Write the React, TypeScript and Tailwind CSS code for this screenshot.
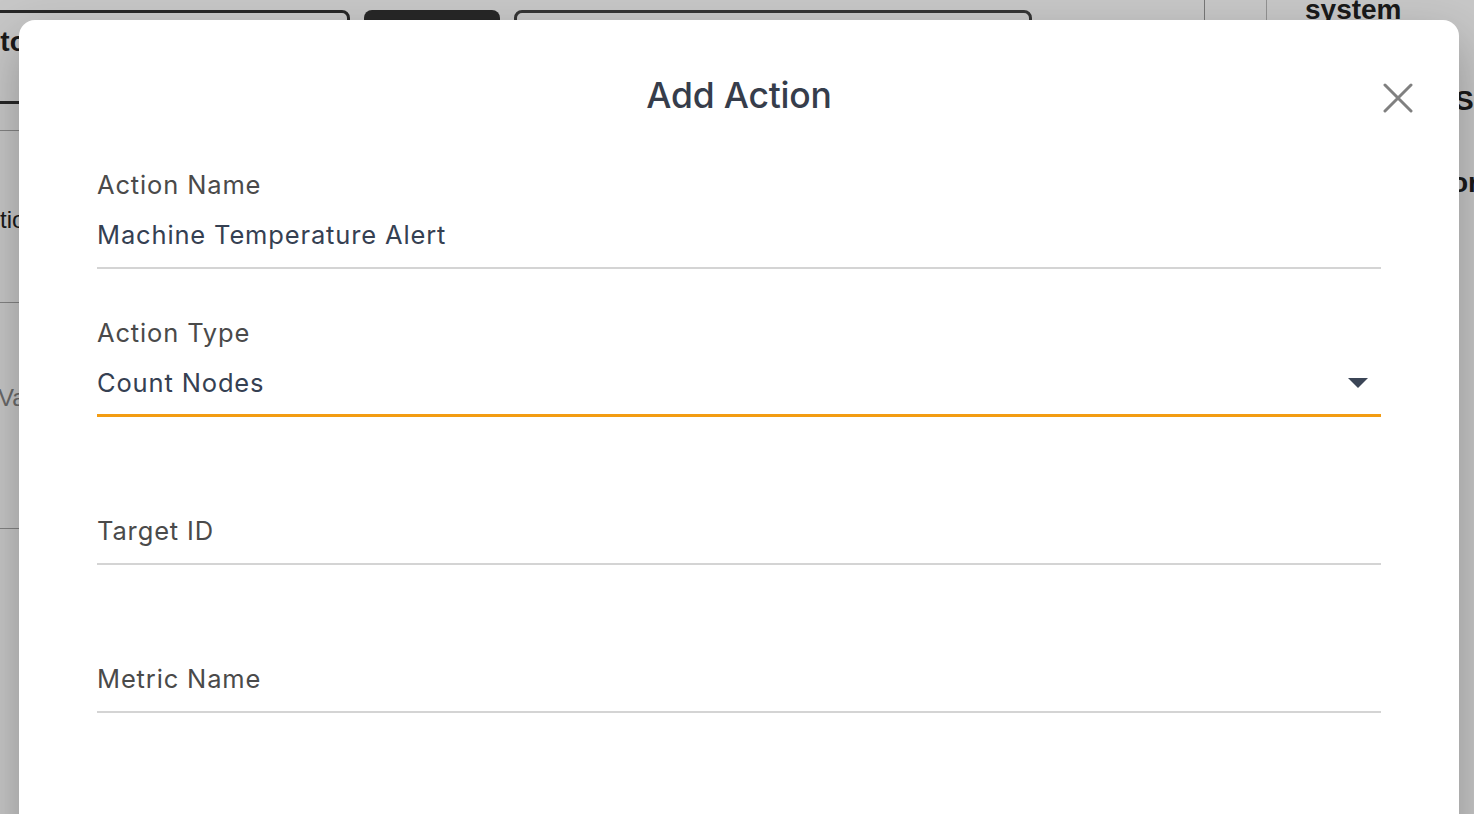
import { useState } from 'react';

type Field = {
    label: string;
    value?: string;
    select?: boolean;
    focused?: boolean;
};

const fields: Field[] = [
    { label: 'Action Name', value: 'Machine Temperature Alert' },
    { label: 'Action Type', value: 'Count Nodes', select: true, focused: true },
    { label: 'Target ID' },
    { label: 'Metric Name' },
];

function FormField({ field }: { field: Field }) {
    const filled = !!field.value;
    const border = field.focused
        ? 'border-b-[3px] border-[#f39c12] pb-[14px]'
        : 'border-b-2 border-[#d4d4d4] pb-[15px]';

    return (
        <div className={`flex flex-col ${border}`}>
            <div className="h-[30px] text-[25.5px] leading-[32px] tracking-[0.85px] text-[#4a4a4a]">
                {filled ? field.label : ''}
            </div>
            <div className="mt-[19px] flex h-[34px] items-center justify-between text-[25.5px] leading-[36px] tracking-[0.85px]">
                {filled ? (
                    <span className="text-[#354052]">{field.value}</span>
                ) : (
                    <span className="text-[#4a4a4a]">{field.label}</span>
                )}
                {field.select && (
                    <svg width="20" height="10" viewBox="0 0 20 10" className="mr-[13px]">
                        <path d="M0 0h20L10 10z" fill="#3b4556" />
                    </svg>
                )}
            </div>
        </div>
    );
}

function BackgroundPage() {
    return (
        <div className="flex h-full flex-col font-['Liberation_Sans',sans-serif] text-[#222]">
            {/* top toolbar */}
            <div className="flex h-[104px] items-start">
                <div className="ml-[-40px] mt-[10px] flex h-[94px] w-[390px] items-start rounded-lg border-[3px] border-[#333] pt-[13px] text-[28px] font-bold leading-[32px]">
                    Auto
                </div>
                <div className="ml-[14px] mt-[10px] h-[60px] w-[136px] rounded-lg bg-[#333]" />
                <div className="ml-[14px] mt-[10px] h-[60px] w-[518px] rounded-lg border-[3px] border-[#444]" />
                <div className="ml-[172px] h-[40px] w-px bg-[#999]" />
                <div className="ml-[61px] h-[40px] w-px bg-[#bbb]" />
                <div className="ml-[38px] mt-[-6px] text-[28px] font-bold leading-[32px]">system</div>
            </div>
            <div className="flex flex-1">
                <div className="flex w-[120px] flex-col">
                    <div className="mt-[26px] h-px bg-[#aaa]" />
                    <div className="ml-[-28px] flex h-[171px] items-center pt-[6px] text-[24px]">Action</div>
                    <div className="h-px bg-[#aaa]" />
                    <div className="ml-[-2px] h-[225px] pt-[80px] text-[24px] leading-[30px] text-[#888]">Value</div>
                    <div className="h-px bg-[#aaa]" />
                </div>
                <div className="flex-1" />
                <div className="flex w-[60px] flex-col pl-[41px] text-[28px] font-bold">
                    <div className="mt-[-24px]">Sc</div>
                    <div className="ml-[-4px] mt-[40px]">or</div>
                </div>
            </div>
        </div>
    );
}

export default function App() {
    const [open] = useState(true);

    return (
        <div className="relative h-[814px] w-full overflow-hidden bg-white">
            <BackgroundPage />
            {open && (
                <div className="absolute inset-0 bg-black/[0.22]">
                    <div className="ml-[19px] mt-[20px] h-[900px] w-[1440px] rounded-2xl bg-white px-[78px] pt-[54px] font-['Inter',sans-serif] shadow-[0_20px_50px_rgba(0,0,0,0.28)]">
                        <div className="relative flex items-center justify-center">
                            <h2 className="text-[35.5px] font-medium leading-[44px] tracking-[-0.2px] text-[#363d4b]">
                                Add Action
                            </h2>
                            <button className="absolute right-[-32px] top-[9px]" aria-label="Close">
                                <svg width="30" height="30" viewBox="0 0 30 30">
                                    <path d="M2 2l26 26M28 2L2 28" stroke="#808080" strokeWidth="3" strokeLinecap="round" />
                                </svg>
                            </button>
                        </div>
                        <div className="mt-[51px] flex flex-col gap-[48px]">
                            {fields.map((f) => (
                                <FormField key={f.label} field={f} />
                            ))}
                        </div>
                    </div>
                </div>
            )}
        </div>
    );
}
